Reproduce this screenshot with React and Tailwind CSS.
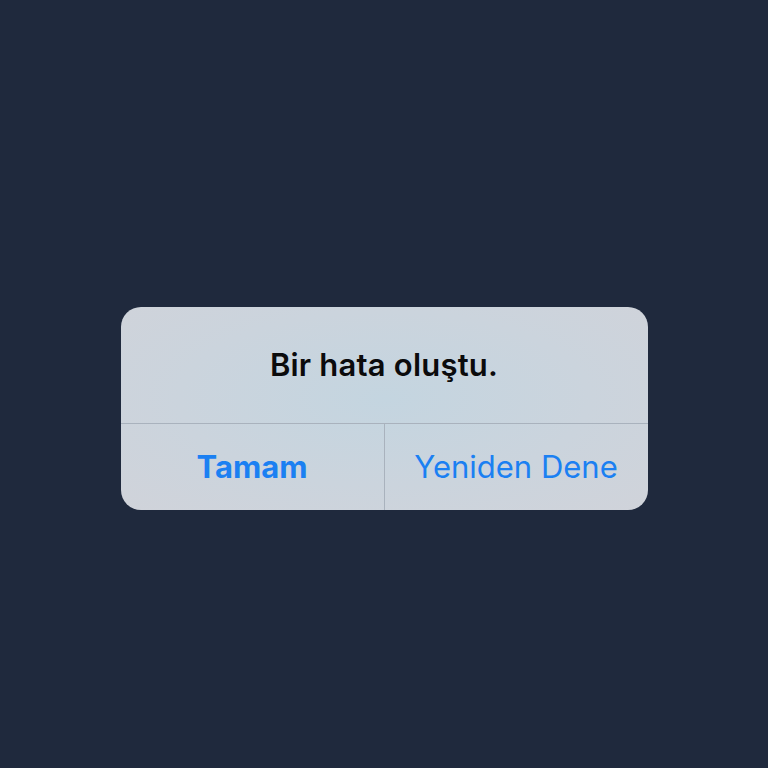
export default function App() {
  return (
    <div className="w-[768px] h-[768px] bg-[#1f293d] flex items-center justify-center" style={{ fontFamily: 'Inter, "Liberation Sans", sans-serif' }}>
      <div className="w-[527px] h-[203px] mt-[49px] rounded-[20px] overflow-hidden flex flex-col bg-[radial-gradient(ellipse_at_50%_45%,#c4d5e0_0%,#cbd4dd_55%,#d0d3da_100%)]">
        <div className="h-[117px] flex items-center justify-center border-b border-[#a9b2bd]">
          <span className="text-[31px] font-semibold text-[#0b0b0c] tracking-[0.2px]">Bir hata oluştu.</span>
        </div>
        <div className="flex-1 flex">
          <button className="flex-1 flex items-center justify-center text-[31px] font-bold text-[#1b80f2]">Tamam</button>
          <div className="w-px bg-[#a9b2bd]" />
          <button className="flex-1 flex items-center justify-center text-[31px] font-normal text-[#1b80f2]">Yeniden Dene</button>
        </div>
      </div>
    </div>
  );
}
